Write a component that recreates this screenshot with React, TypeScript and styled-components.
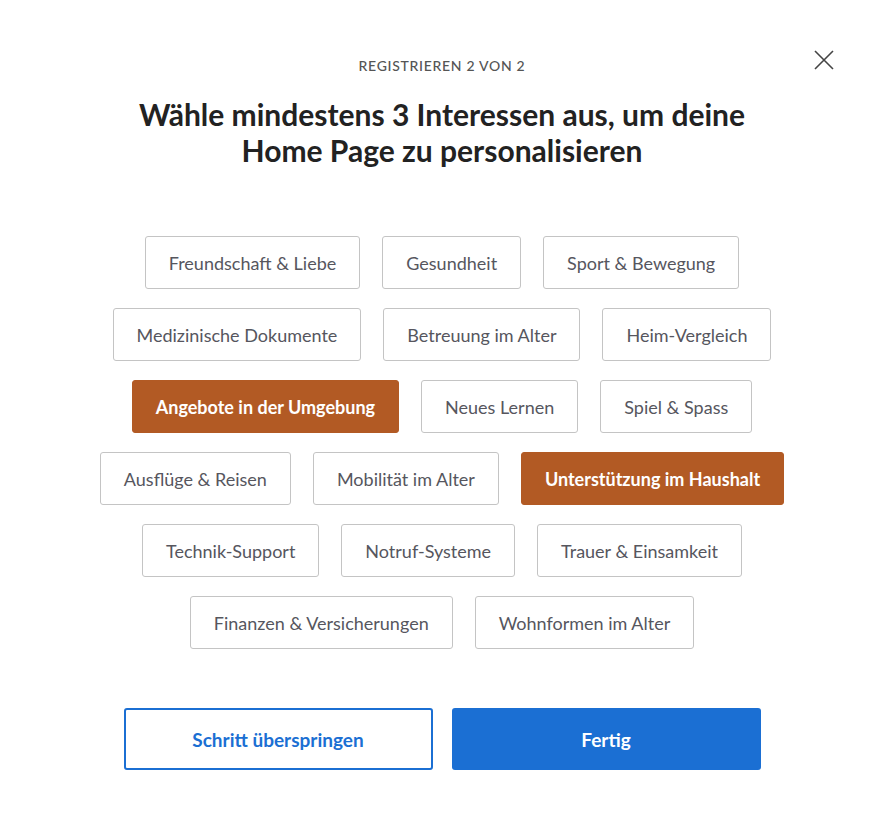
import React, { useState } from "react";
import styled, { createGlobalStyle } from "styled-components";

const rows: string[][] = [
     ["Freundschaft & Liebe", "Gesundheit", "Sport & Bewegung"],
     ["Medizinische Dokumente", "Betreuung im Alter", "Heim-Vergleich"],
     ["Angebote in der Umgebung", "Neues Lernen", "Spiel & Spass"],
     ["Ausflüge & Reisen", "Mobilität im Alter", "Unterstützung im Haushalt"],
     ["Technik-Support", "Notruf-Systeme", "Trauer & Einsamkeit"],
     ["Finanzen & Versicherungen", "Wohnformen im Alter"],
];

export default function App() {
     const [selected, setSelected] = useState<string[]>([
          "Angebote in der Umgebung",
          "Unterstützung im Haushalt",
     ]);

     const toggle = (name: string) =>
          setSelected((s) => (s.includes(name) ? s.filter((x) => x !== name) : [...s, name]));

     return (
          <>
               <Global />
               <S.Page>
                    <S.Close aria-label="Schließen">
                         <svg width="20" height="20" viewBox="0 0 20 20">
                              <path d="M1 1 L19 19 M19 1 L1 19" stroke="#444" strokeWidth="1.6" fill="none" />
                         </svg>
                    </S.Close>
                    <S.Step>Registrieren 2 von 2</S.Step>
                    <S.Title>
                         Wähle mindestens 3 Interessen aus, um deine
                         <br />
                         Home Page zu personalisieren
                    </S.Title>
                    <S.Tags>
                         {rows.map((row, i) => (
                              <S.Row key={i}>
                                   {row.map((t) => (
                                        <S.Tag key={t} $active={selected.includes(t)} onClick={() => toggle(t)}>
                                             {t}
                                        </S.Tag>
                                   ))}
                              </S.Row>
                         ))}
                    </S.Tags>
                    <S.Actions>
                         <S.Skip>Schritt überspringen</S.Skip>
                         <S.Done>Fertig</S.Done>
                    </S.Actions>
               </S.Page>
          </>
     );
}

const Global = createGlobalStyle`
     body {
          margin: 0;
          background: #fff;
          font-family: Lato, "Noto Sans", sans-serif;
     }
     * { box-sizing: border-box; }
`;

const S = {
     Page: styled.div`
          position: relative;
          width: 884px;
          height: 840px;
          display: flex;
          flex-direction: column;
          align-items: center;
          padding-top: 58px;
     `,
     Close: styled.button`
          position: absolute;
          top: 50px;
          right: 50px;
          width: 20px;
          height: 20px;
          padding: 0;
          border: none;
          background: none;
          cursor: pointer;
     `,
     Step: styled.div`
          font-size: 14px;
          line-height: 16px;
          letter-spacing: 0.7px;
          text-transform: uppercase;
          color: #555;
          font-weight: 500;
     `,
     Title: styled.h1`
          margin: 22px 0 0;
          text-align: center;
          font-size: 30px;
          line-height: 36px;
          font-weight: 700;
          color: #222;
     `,
     Tags: styled.div`
          margin-top: 68px;
          display: flex;
          flex-direction: column;
          align-items: center;
          gap: 19px;
     `,
     Row: styled.div`
          display: flex;
          justify-content: center;
          gap: 22px;
     `,
     Tag: styled.button<{ $active?: boolean }>`
          height: 53px;
          padding: 0 23px;
          border-radius: 3px;
          font-family: inherit;
          font-size: 18px;
          font-weight: ${(p) => (p.$active ? 700 : 400)};
          color: ${(p) => (p.$active ? "#fff" : "#56565e")};
          background: ${(p) => (p.$active ? "#b25a24" : "#fff")};
          border: 1px solid ${(p) => (p.$active ? "#b25a24" : "#c4c4c4")};
          cursor: pointer;
     `,
     Actions: styled.div`
          margin-top: 59px;
          display: flex;
          gap: 19px;
     `,
     Skip: styled.button`
          width: 309px;
          height: 62px;
          border-radius: 3px;
          border: 2px solid #1b6fd3;
          background: #fff;
          color: #1b6fd3;
          font-family: inherit;
          font-size: 19px;
          font-weight: 700;
     `,
     Done: styled.button`
          width: 309px;
          height: 62px;
          border-radius: 3px;
          border: none;
          background: #1b6fd3;
          color: #fff;
          font-family: inherit;
          font-size: 19px;
          font-weight: 700;
     `,
};
